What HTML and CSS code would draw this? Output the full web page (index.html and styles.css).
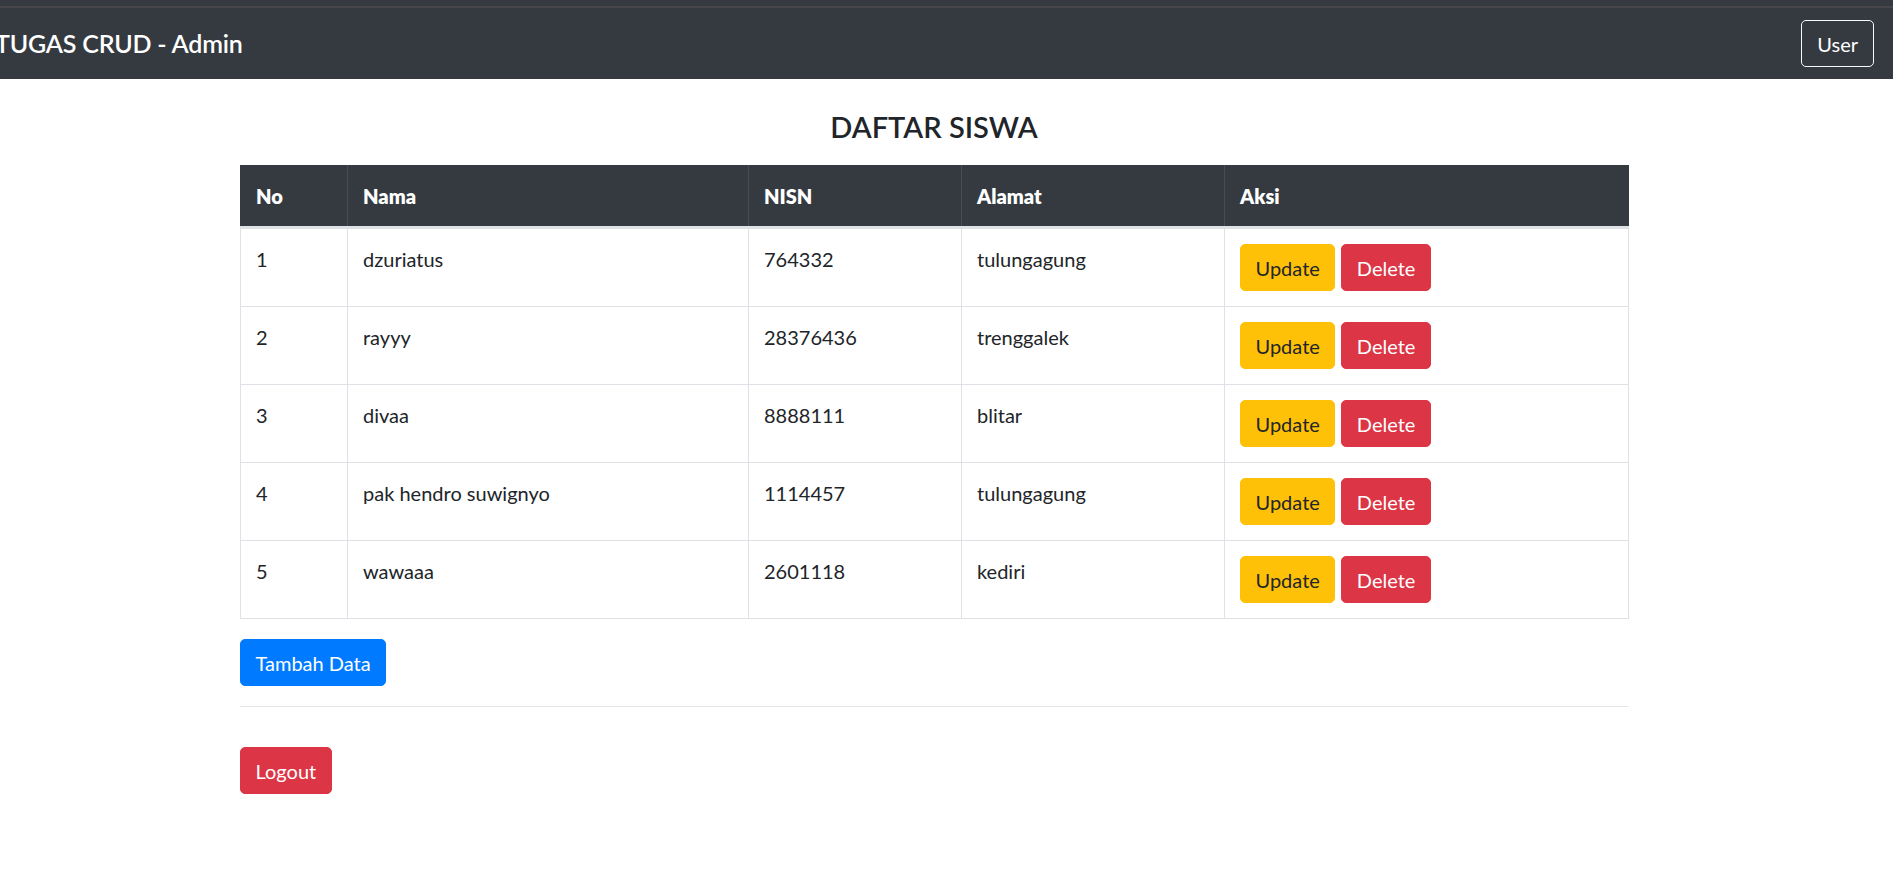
FILE: index.html
```html
<!DOCTYPE html>
<html lang="id">
<head>
<meta charset="utf-8">
<title>Daftar Siswa</title>
<link rel="stylesheet" href="styles.css">
</head>
<body>
<div class="topstrip"></div>
<nav class="navbar">
  <a class="brand" href="#">TUGAS CRUD - Admin</a>
  <button class="btn btn-outline-light">User</button>
</nav>
<main class="container">
  <h3 class="title">DAFTAR SISWA</h3>
  <table class="table">
    <colgroup>
      <col class="c-no"><col class="c-nama"><col class="c-nisn"><col class="c-alamat"><col class="c-aksi">
    </colgroup>
    <thead>
      <tr><th>No</th><th>Nama</th><th>NISN</th><th>Alamat</th><th>Aksi</th></tr>
    </thead>
    <tbody>
      <tr><td>1</td><td>dzuriatus</td><td>764332</td><td>tulungagung</td><td><div class="actions"><button class="btn btn-warning">Update</button><button class="btn btn-danger">Delete</button></div></td></tr>
      <tr><td>2</td><td>rayyy</td><td>28376436</td><td>trenggalek</td><td><div class="actions"><button class="btn btn-warning">Update</button><button class="btn btn-danger">Delete</button></div></td></tr>
      <tr><td>3</td><td>divaa</td><td>8888111</td><td>blitar</td><td><div class="actions"><button class="btn btn-warning">Update</button><button class="btn btn-danger">Delete</button></div></td></tr>
      <tr><td>4</td><td>pak hendro suwignyo</td><td>1114457</td><td>tulungagung</td><td><div class="actions"><button class="btn btn-warning">Update</button><button class="btn btn-danger">Delete</button></div></td></tr>
      <tr><td>5</td><td>wawaaa</td><td>2601118</td><td>kediri</td><td><div class="actions"><button class="btn btn-warning">Update</button><button class="btn btn-danger">Delete</button></div></td></tr>
    </tbody>
  </table>
  <div class="row-btn"><button class="btn btn-primary">Tambah Data</button></div>
  <hr class="divider">
  <div class="row-btn logout"><button class="btn btn-danger">Logout</button></div>
</main>
</body>
</html>
```
FILE: styles.css
```css
* { box-sizing: border-box; }
html, body { margin: 0; padding: 0; }
body {
  font-family: Lato, "Open Sans", sans-serif;
  font-size: 20px;
  line-height: 30px;
  color: #212529;
  background: #fff;
  overflow: hidden;
}
.topstrip {
  height: 8px;
  background: #343a40;
  border-bottom: 2px solid #48464a;
}
.navbar {
  height: 71px;
  background: #343a40;
  display: flex;
  align-items: center;
  justify-content: space-between;
  padding: 0 19px 0 0;
}
.brand {
  color: #fff;
  text-decoration: none;
  font-size: 25px;
  line-height: 37px;
  margin-left: -5px;
  font-weight: 600;
  letter-spacing: -0.2px;
}
.btn {
  font-family: inherit;
  font-size: 20px;
  line-height: 30px;
  padding: 7.5px 14.5px;
  border: 1px solid transparent;
  border-radius: 5px;
  cursor: pointer;
  display: inline-block;
}
.btn-outline-light { background: transparent; color: #fff; border-color: #f8f9fa; padding: 7.5px 15px; }
.btn-warning { background: #ffc107; border-color: #ffc107; color: #212529; }
.btn-danger { background: #dc3545; border-color: #dc3545; color: #fff; }
.btn-primary { background: #007bff; border-color: #007bff; color: #fff; }
.container {
  width: 1628px;
  padding-left: 240px;
}
.title {
  margin: 30px 0 20px;
  text-align: center;
  font-size: 29px;
  line-height: 36px;
  font-weight: 600;
}
.table {
  width: 1388px;
  table-layout: fixed;
  border-collapse: collapse;
  margin-bottom: 20px;
}
.c-no { width: 107px; }
.c-nama { width: 401px; }
.c-nisn { width: 213px; }
.c-alamat { width: 263px; }
.c-aksi { width: 404px; }
.table th, .table td {
  padding: 15px;
  text-align: left;
  vertical-align: top;
  border: 1px solid #dee2e6;
}
.table thead th {
  background: #343a40;
  color: #fff;
  font-weight: 800;
  border-color: #454d55;
  border-top-color: #343a40;
  border-bottom: 3px solid #dee2e6;
}
.table thead th:first-child { border-left-color: #343a40; }
.table thead th:last-child { border-right-color: #343a40; }
.table td { height: 78px; }
.actions { display: flex; gap: 6px; }
.row-btn { display: flex; }
.divider {
  margin: 20px 0 0;
  border: 0;
  border-top: 1px solid rgba(0,0,0,.1);
  width: 1388px;
}
.logout { padding-top: 40px; }
```
